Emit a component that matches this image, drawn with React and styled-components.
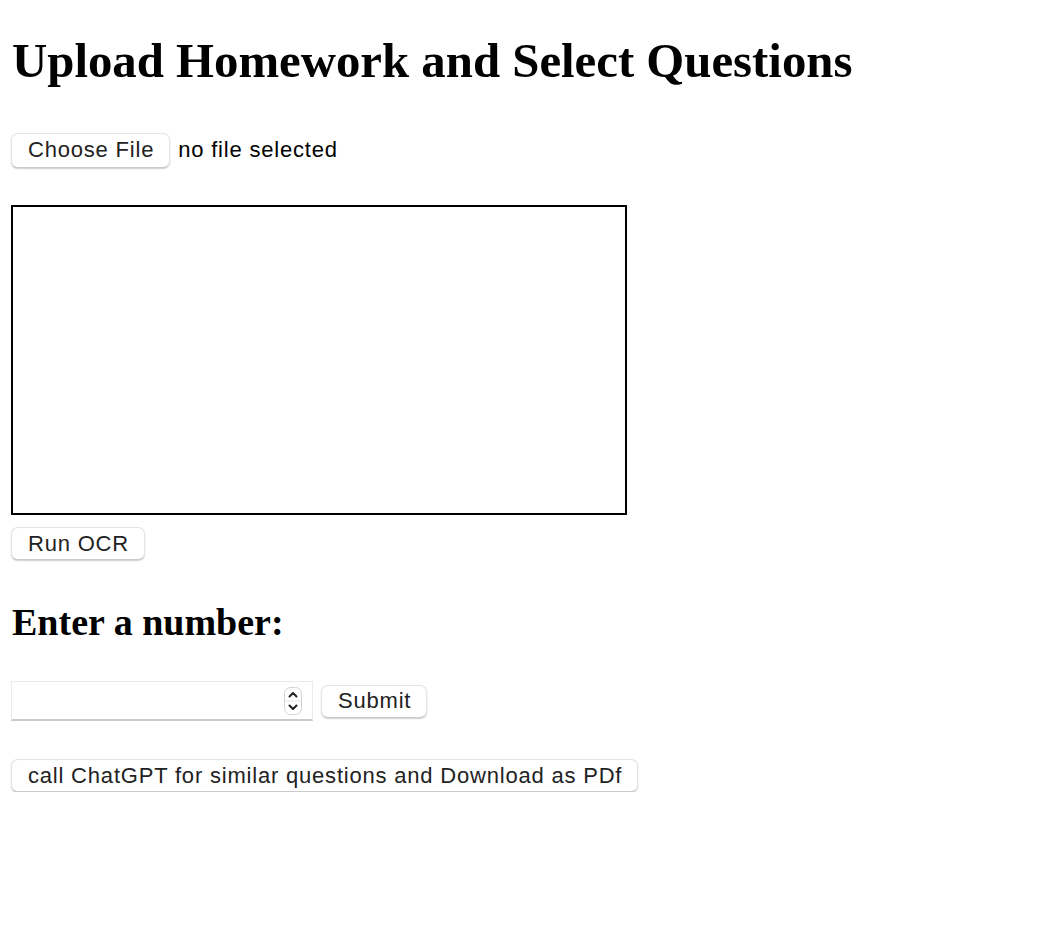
import React from 'react';
import styled, { createGlobalStyle } from 'styled-components';

const GlobalStyle = createGlobalStyle`
  html, body {
    margin: 0;
    padding: 0;
    background: #fff;
  }
  body {
    font-family: "Liberation Sans", Arial, sans-serif;
    color: #000;
  }
`;

const Page = styled.div`
  padding: 0 11px;
`;

const Title = styled.h1`
  font-family: "Liberation Serif", "Times New Roman", serif;
  font-weight: bold;
  font-size: 48.8px;
  line-height: 55px;
  margin: 34px 0 43px 1px;
`;

const FileRow = styled.div`
  display: flex;
  align-items: center;
  gap: 8px;
  height: 36px;
`;

const Button = styled.button`
  font-family: "Liberation Sans", Arial, sans-serif;
  font-size: 22px;
  letter-spacing: 0.8px;
  color: #222;
  background: #fff;
  border: 1px solid #e4e4e4;
  border-bottom-color: #cacaca;
  border-radius: 7px;
  box-shadow: 0 1px 1.5px rgba(0, 0, 0, 0.2);
  height: ${p => p.$h || 33}px;
  padding: 0 15px 0 16px;
  line-height: 1;
  cursor: pointer;
`;

const FileName = styled.span`
  font-size: 22px;
  letter-spacing: 0.8px;
  color: #000;
`;

const Canvas = styled.div`
  width: 612px;
  height: 306px;
  border: 2px solid #000;
  margin-top: 37px;
`;

const Block = styled.div`
  margin-top: ${p => p.$mt || 0}px;
`;

const SubTitle = styled.h2`
  font-family: "Liberation Serif", "Times New Roman", serif;
  font-weight: bold;
  font-size: 38px;
  line-height: 41px;
  margin: 42px 0 38px 1px;
`;

const InputRow = styled.div`
  display: flex;
  align-items: center;
  gap: 8px;
`;

const Field = styled.div`
  display: flex;
  align-items: center;
  width: 302px;
  height: 40px;
  border: 1px solid #ebebeb;
  border-bottom: 2px solid #c9c9c9;
  box-sizing: border-box;
  padding-right: 10px;
  background: #fff;
`;

const NumberInput = styled.input`
  flex: 1;
  min-width: 0;
  border: none;
  outline: none;
  font-size: 22px;
  font-family: "Liberation Sans", Arial, sans-serif;
  background: transparent;
  padding: 0 6px;
`;

const Spinner = styled.svg`
  flex: none;
  width: 18px;
  height: 28px;
`;

function StepIcon() {
  return (
    <Spinner viewBox="0 0 18 28">
      <rect x="0.5" y="0.5" width="17" height="27" rx="6" fill="#fff" stroke="#d2d2d2" />
      <line x1="0.5" y1="14" x2="17.5" y2="14" stroke="#e6e6e6" />
      <path d="M5.5 9.5 L9 6 L12.5 9.5" fill="none" stroke="#222" strokeWidth="2" strokeLinecap="round" strokeLinejoin="round" />
      <path d="M5.5 18.5 L9 22 L12.5 18.5" fill="none" stroke="#222" strokeWidth="2" strokeLinecap="round" strokeLinejoin="round" />
    </Spinner>
  );
}

export default function App() {
  return (
    <Page>
      <GlobalStyle />
      <Title>Upload Homework and Select Questions</Title>
      <FileRow>
        <Button $h={35}>Choose File</Button>
        <FileName>no file selected</FileName>
      </FileRow>
      <Canvas />
      <Block $mt={12}>
        <Button $h={33}>Run OCR</Button>
      </Block>
      <SubTitle>Enter a number:</SubTitle>
      <InputRow>
        <Field>
          <NumberInput type="text" />
          <StepIcon />
        </Field>
        <Button $h={33}>Submit</Button>
      </InputRow>
      <Block $mt={38}>
        <Button $h={33}>call ChatGPT for similar questions and Download as PDf</Button>
      </Block>
    </Page>
  );
}
